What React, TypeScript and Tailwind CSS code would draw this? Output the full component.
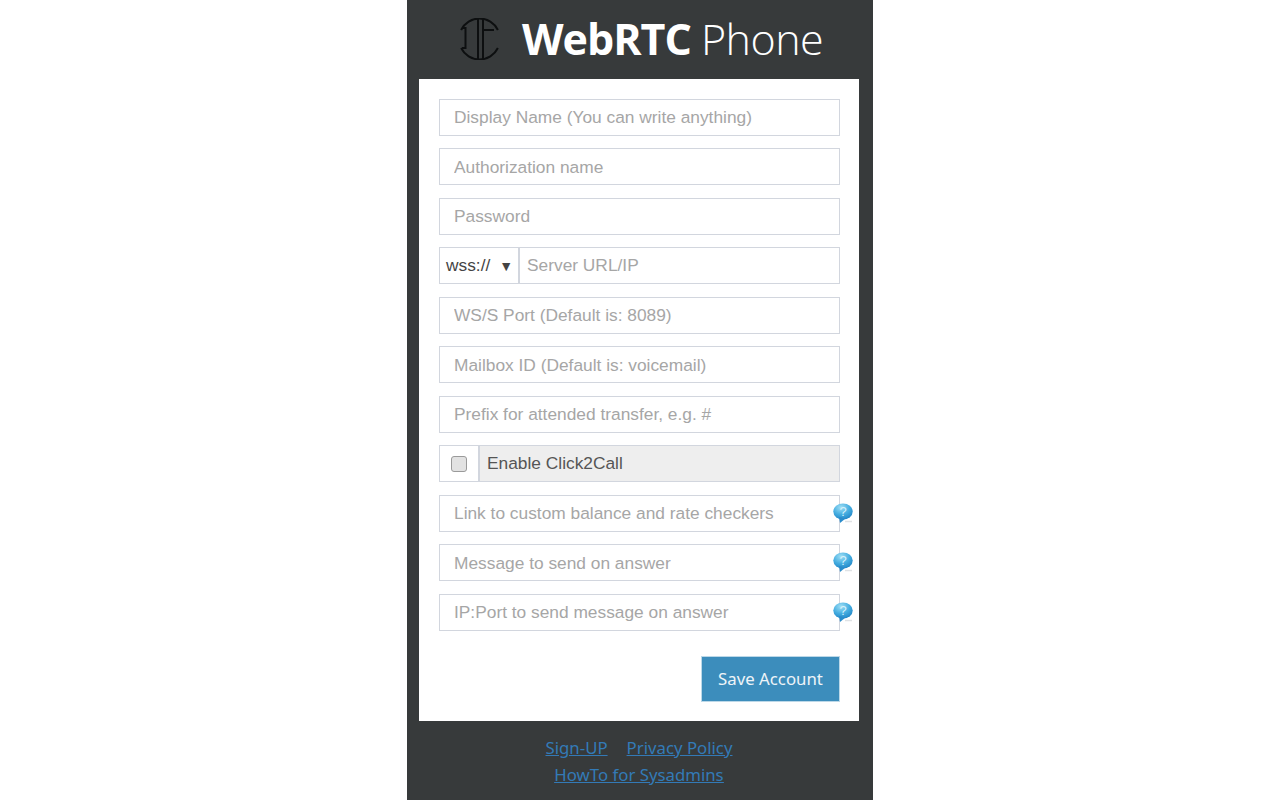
const fieldClass =
  "block h-[37px] w-full border border-[#d2d6de] bg-white px-[14px] pt-px text-[17.33px] text-[#555] outline-none placeholder:text-[#a6a6a6]";

const LogoMark = () => (
  <svg width="42" height="42" viewBox="0 0 42 42" fill="none" stroke="#0d0f10" strokeWidth="2" className="shrink-0">
    <path d="M2.1 12A20.5 20.5 0 0 1 38.9 12" />
    <path d="M2.1 30A20.5 20.5 0 0 0 38.9 30" />
    <path d="M3 10H6.5V30H3" />
    <path d="M19 1V41" />
    <path d="M24 1V41" />
    <path d="M24 12H35" />
  </svg>
);

const HelpIcon = () => (
  <svg width="22" height="22" viewBox="0 0 22 22" className="absolute right-[-15px] top-[8px]">
    <defs>
      <radialGradient id="bubble" cx="40%" cy="25%" r="80%">
        <stop offset="0%" stopColor="#9fdff5" />
        <stop offset="55%" stopColor="#45ade0" />
        <stop offset="100%" stopColor="#1f84c6" />
      </radialGradient>
    </defs>
    <path d="M12 18.5H19" stroke="#dfe2e5" strokeWidth="1.5" />
    <ellipse cx="10" cy="8.5" rx="9.7" ry="8" fill="url(#bubble)" />
    <path d="M6 14L7 20L12.5 15.5Z" fill="#2a8ccb" />
    <text x="10" y="13" textAnchor="middle" fontSize="13" fill="#d6f1fb" fontFamily="'Liberation Sans', sans-serif">?</text>
  </svg>
);

const Field = ({ placeholder, help, type = "text" }: { placeholder: string; help?: boolean; type?: string }) => (
  <div className="relative">
    <input type={type} placeholder={placeholder} className={fieldClass} />
    {help && <HelpIcon />}
  </div>
);

export default function App() {
  return (
    <div className="h-[800px] w-full overflow-hidden bg-white font-['Liberation_Sans',sans-serif]">
      <div className="mx-auto flex h-full w-[466px] flex-col bg-[#373a3b] pl-3 pr-[14px]">
        <header className="flex h-[79px] items-center gap-[21px] pb-[2px] pl-[40px] font-['Open_Sans',sans-serif] text-[43px] leading-none text-white">
          <LogoMark />
          <h1 className="flex gap-[10px]">
            <span className="font-bold tracking-[-1px]">WebRTC</span>
            <span className="font-light tracking-[-0.5px]">Phone</span>
          </h1>
        </header>

        <main className="flex h-[642px] flex-col bg-white pl-5 pr-[19px] pt-[19.75px]">
          <div className="flex flex-col gap-[12.5px]">
            <Field placeholder="Display Name (You can write anything)" />
            <Field placeholder="Authorization name" />
            <Field placeholder="Password" type="password" />
            <div className="flex h-[37px] border border-[#d2d6de] text-[17.33px]">
              <div className="flex w-[80px] items-center justify-between border-r-2 border-[#d2d6de] pl-[6px] pr-[5px] pt-px text-[#444]">
                <span>wss://</span>
                <span className="text-[14px] text-[#444]">▼</span>
              </div>
              <input placeholder="Server URL/IP" className="min-w-0 flex-1 px-[7px] pt-px outline-none placeholder:text-[#a6a6a6]" />
            </div>
            <Field placeholder="WS/S Port (Default is: 8089)" />
            <Field placeholder="Mailbox ID (Default is: voicemail)" />
            <Field placeholder="Prefix for attended transfer, e.g. #" />
            <label className="flex h-[37px] border border-[#d2d6de] text-[17.33px] text-[#555]">
              <span className="flex w-[40px] items-center justify-center border-r-2 border-[#d2d6de]">
                <span className="h-[16px] w-[16px] rounded-[3px] border border-[#9a9a9a] bg-[#e2e2e2]" />
              </span>
              <span className="flex flex-1 items-center bg-[#eeeeee] pl-[7px] pt-px">Enable Click2Call</span>
            </label>
            <Field placeholder="Link to custom balance and rate checkers" help />
            <Field placeholder="Message to send on answer" help />
            <Field placeholder="IP:Port to send message on answer" help />
          </div>
          <div className="mt-[25.25px] flex justify-end">
            <button className="h-[46px] w-[139px] border border-[#bcd8e8] bg-[#3c8dbc] font-['Noto_Sans',sans-serif] text-[16.8px] text-[#eef4f8]">
              Save Account
            </button>
          </div>
        </main>

        <footer className="flex flex-col items-center pt-[13px] font-['Noto_Sans',sans-serif] text-[16.8px] leading-[27px] text-[#337ab7] underline">
          <div className="flex gap-[19px]">
            <a href="#">Sign-UP</a>
            <a href="#">Privacy Policy</a>
          </div>
          <a href="#">HowTo for Sysadmins</a>
        </footer>
      </div>
    </div>
  );
}
